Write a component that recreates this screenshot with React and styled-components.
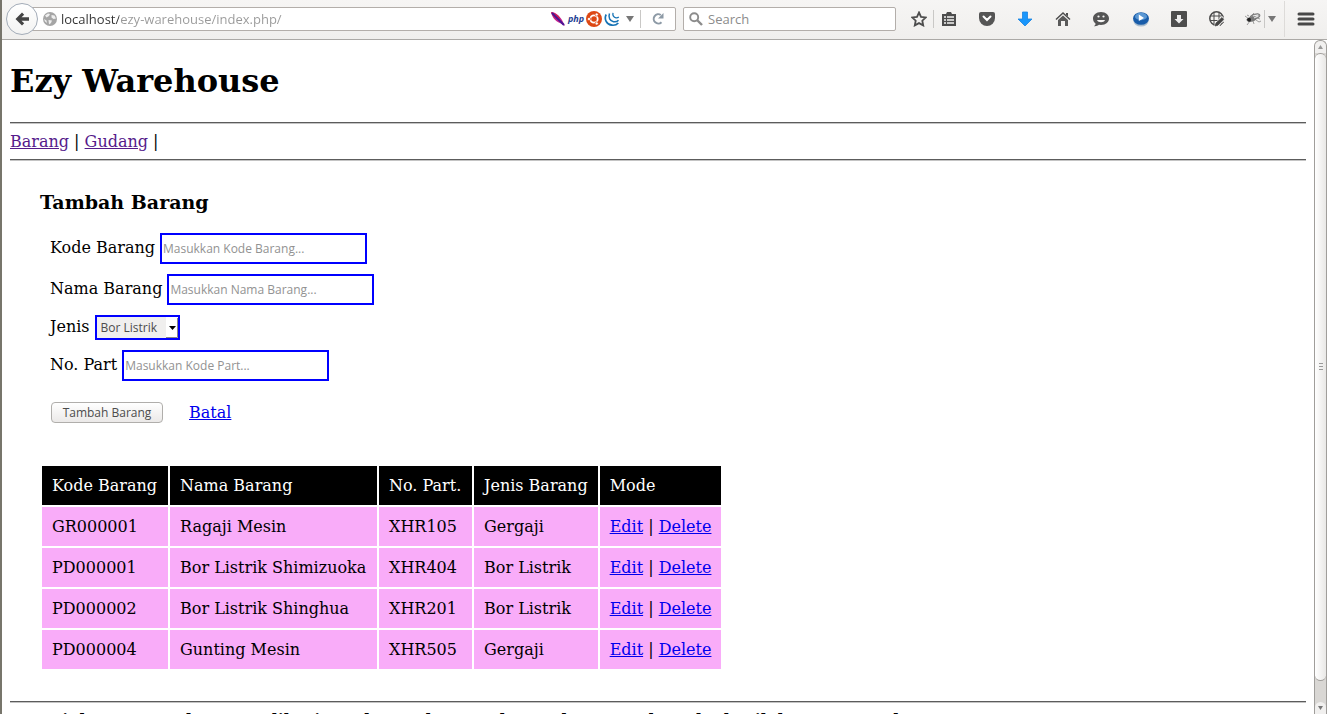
import React from "react";
import styled, { createGlobalStyle } from "styled-components";

const UI_FONT = '"Open Sans", "Noto Sans", sans-serif';
const PAGE_FONT = '"DejaVu Serif", serif';

const GlobalStyle = createGlobalStyle`
  * { box-sizing: border-box; }
  body { margin: 0; background: #fff; }
`;

const Window = styled.div`
  display: flex;
  flex-direction: column;
  height: 100vh;
  overflow: hidden;
  border-left: 2px solid #77756b;
  background: #fff;
`;

const Toolbar = styled.header`
  display: flex;
  align-items: center;
  flex: none;
  height: 40px;
  padding: 0 0 2px 4px;
  border-bottom: 1px solid #aba9a6;
  background: linear-gradient(#f6f5f4, #f0efed);
  font-family: ${UI_FONT};
`;

const BackButton = styled.button`
  position: relative;
  z-index: 1;
  display: grid;
  place-items: center;
  flex: none;
  width: 32px;
  height: 32px;
  margin-right: -12px;
  padding: 0;
  border: 1px solid #a3acb8;
  border-radius: 50%;
  background: linear-gradient(#fff, #f3f3f2);
`;

const Field = styled.div`
  display: flex;
  align-items: center;
  height: 24px;
  border: 1px solid #b3aeaa;
  border-radius: 2px;
  background: #fff;
`;

const UrlField = styled(Field)`
  flex: 1;
  padding-left: 15px;
`;

const SearchField = styled(Field)`
  flex: none;
  width: 213px;
  margin: 0 8px 0 7px;
  padding-left: 5px;
  gap: 5px;
`;

const BareInput = styled.input`
  flex: 1;
  min-width: 0;
  padding: 0;
  border: 0;
  outline: 0;
  background: transparent;
  color: #333;
  font: 13px/20px ${UI_FONT};
  &::placeholder { color: #8c8c8c; opacity: 1; }
`;

const UrlInput = styled(BareInput)`
  margin-left: 3px;
  background: linear-gradient(90deg, #333 58px, #999 58px);
  background-clip: text;
  color: transparent;
`;

const IconButton = styled.button`
  display: grid;
  place-items: center;
  flex: none;
  width: ${(p) => p.$width}px;
  height: 24px;
  padding: 0;
  border: 0;
  background: transparent;
`;

const Divider = styled.span`
  flex: none;
  width: 1px;
  height: ${(p) => p.$height || 18}px;
  margin-left: ${(p) => p.$space || 0}px;
  background: ${(p) => (p.$height ? "#dddbd9" : "#c9c8c6")};
`;

const Badges = styled.div`
  display: flex;
  align-items: center;
  gap: 2px;
`;

const PhpMark = styled.span`
  width: 16px;
  color: #1f3f94;
  font: italic bold 9px/12px ${UI_FONT};
`;

const Viewport = styled.div`
  display: flex;
  flex: 1;
  min-height: 0;
`;

const Page = styled.main`
  flex: 1;
  min-width: 0;
  overflow: hidden;
  padding: 0 8px;
  color: #000;
  font: 16px/19px ${PAGE_FONT};
`;

const Title = styled.h1`
  margin: 21px 0;
  font-size: 32px;
  line-height: 40px;
`;

const Rule = styled.hr`
  height: 2px;
  margin: 8px 0;
  border: 0;
  border-top: 1px solid #5c5c5c;
  background: #c4c4c4;
`;

const Link = styled.a`
  color: ${(p) => (p.$visited ? "#551a8b" : "#0000ee")};
  text-decoration: underline;
`;

const Content = styled.section`
  padding: 22px 30px;
`;

const Heading = styled.h3`
  margin: 0 0 20px;
  font-size: 19px;
  line-height: 22px;
`;

const Form = styled.form`
  display: flex;
  flex-direction: column;
  gap: 10px;
  padding: 0 10px;
`;

const FormRow = styled.div`
  display: flex;
  align-items: baseline;
  gap: 5px;
`;

const TextInput = styled.input`
  width: 207px;
  height: 31px;
  padding: 0 1px;
  border: 2px solid #0000ff;
  outline: 0;
  background: #fff;
  color: #4c4c4c;
  font: 12px/20px ${UI_FONT};
  &::placeholder { color: #929292; opacity: 1; }
`;

const SelectBox = styled.span`
  display: inline-grid;
  align-items: center;
  width: 85px;
  height: 25px;
  > * { grid-area: 1 / 1; }
  > svg { justify-self: end; margin-right: 2px; pointer-events: none; }
`;

const Select = styled.select`
  appearance: none;
  width: 100%;
  height: 25px;
  padding: 0 0 0 4px;
  border: 2px solid #0000ff;
  border-radius: 0;
  background: #f0efee;
  color: #4c4c4c;
  font: 12px/20px ${UI_FONT};
`;

const Actions = styled.div`
  display: flex;
  align-items: center;
  gap: 26px;
  padding: 11px 1px 0;
`;

const SubmitButton = styled.button`
  width: 112px;
  height: 21px;
  padding: 0;
  border: 1px solid #b0aeab;
  border-radius: 4px;
  background: linear-gradient(#fff, #ebe9e8);
  color: #4c4c4c;
  font: 12px/18px ${UI_FONT};
`;

const Table = styled.table`
  margin-top: 41px;
  border-collapse: separate;
  border-spacing: 2px;
  white-space: nowrap;
`;

const HeadCell = styled.th`
  width: ${(p) => p.$width}px;
  padding: 10px;
  background: #000;
  color: #fff;
  font-weight: normal;
  text-align: left;
`;

const Cell = styled.td`
  padding: 10px;
  background: #f9acf9;
`;

const Footer = styled.h4`
  margin: 7px 0 0;
  font-size: 16px;
  line-height: 19px;
  white-space: nowrap;
`;

const Scrollbar = styled.div`
  display: flex;
  flex-direction: column;
  flex: none;
  width: 13px;
  border: 1px solid #a09e9b;
  border-bottom: 0;
  border-radius: 6px 6px 0 0;
  background: #d9d7d4;
`;

const ScrollArrow = styled.button`
  display: grid;
  place-items: center;
  flex: none;
  height: 12px;
  padding: 0;
  border: 0;
  border-radius: 6px 6px 0 0;
  background: #f1f0ef;
`;

const Thumb = styled.div`
  display: grid;
  place-items: center;
  flex: 1;
  margin-bottom: 21px;
  border: solid #a09e9b;
  border-width: 1px 0;
  border-radius: 6px;
  background: linear-gradient(90deg, #fff, #e9e8e6);
`;

const Svg = ({ size = 16, width, height, children }) => (
  <svg width={width || size} height={height || size} viewBox={`0 0 ${width || size} ${height || size}`} fill="none" aria-hidden="true">
    {children}
  </svg>
);

const Caret = () => (
  <Svg width={8} height={6}><path d="M0 0h8L4 6z" fill="#777" /></Svg>
);

const icons = {
  back: <Svg><path d="M8 1.5 1.5 8 8 14.5l2.2-2.2L7.5 9.8H15V6.2H7.5l2.7-2.5z" fill="#444" /></Svg>,
  globe: (
    <Svg>
      <circle cx="8" cy="8" r="7" fill="#a5a5a5" />
      <path d="M3 4.500 6 2.500l2 .5-1 2-2.500 1.500zM9.500 4l3 .5 1.500 3-2.500.5-2-1.500zM6.500 9l3.500.500L9 12l-2 1.500zM2 8l2.500 1.500L5 12l-2-1.500z" fill="#eee" />
    </Svg>
  ),
  feather: (
    <Svg>
      <path d="M1 1c4 0 8 3 11 8l3 6-5-3C5 10 2 6 1 1z" fill="#c4248e" />
      <path d="M1 1c4 1 7 3 9 6L8 9C4 7 2 4 1 1z" fill="#d5244b" />
      <path d="m2 2 9 9 3 3" stroke="#4b1595" strokeWidth="2" />
    </Svg>
  ),
  ubuntu: (
    <Svg>
      <circle cx="8" cy="8" r="8" fill="#dd4814" />
      <circle cx="8" cy="8" r="3.7" stroke="#fff" strokeWidth="1.8" />
      <circle cx="3" cy="8" r="1.6" fill="#fff" stroke="#dd4814" strokeWidth=".7" />
      <circle cx="10.7" cy="3.5" r="1.6" fill="#fff" stroke="#dd4814" strokeWidth=".7" />
      <circle cx="10.7" cy="12.5" r="1.6" fill="#fff" stroke="#dd4814" strokeWidth=".7" />
    </Svg>
  ),
  jquery: (
    <Svg>
      <path d="M2.200 3.500C-.2 8 2.500 13.500 8 14.200c2.500.3 4.700-.4 6.300-2.200" stroke="#1673b5" strokeWidth="1.700" />
      <path d="M5.500 2.500C4 6.500 6 10 9.500 10.700c2 .3 3.700-.1 5-1.500" stroke="#1673b5" strokeWidth="1.500" />
      <path d="M9 1.800c-.6 2.600.7 4.700 3 5.100 1.100.1 2-.1 2.800-.8" stroke="#1673b5" strokeWidth="1.300" />
    </Svg>
  ),
  reload: (
    <Svg size={14}>
      <path d="M10.500 10.200A4.600 4.600 0 1 1 9.800 3" stroke="#8d9aa6" strokeWidth="2" />
      <path d="M12.500 1v5.500H7z" fill="#8d9aa6" />
    </Svg>
  ),
  search: (
    <Svg size={14}>
      <circle cx="5.200" cy="5.200" r="4" stroke="#8c8c8c" strokeWidth="1.900" />
      <path d="m8 8 5 5" stroke="#8c8c8c" strokeWidth="2.400" />
    </Svg>
  ),
  star: <Svg><path d="m8 1.500 2 4.300 4.800.6-3.500 3.300.9 4.700L8 12.100l-4.200 2.300.9-4.700L1.200 6.400 6 5.800z" stroke="#4d4d4d" strokeWidth="1.800" /></Svg>,
  list: (
    <Svg>
      <path d="M1 3h4l1-2h4l1 2h4v12H1z" fill="#4d4d4d" />
      <path d="M3 6h2M3 9h2M3 12h2M6 6h7M6 9h7M6 12h7" stroke="#f4f3f2" strokeWidth="1.500" />
    </Svg>
  ),
  pocket: (
    <Svg>
      <path d="M2 1h12q2 0 2 2v4a8 8 0 0 1-16 0V3q0-2 2-2z" fill="#555" />
      <path d="m4.500 5.500 3.500 3.500 3.500-3.500" stroke="#fff" strokeWidth="2" strokeLinecap="round" />
    </Svg>
  ),
  download: <Svg><path d="M5.500 1h5v7H15l-7 7-7-7h4.500z" fill="#1a96fb" stroke="#1683e2" strokeWidth=".8" /></Svg>,
  home: (
    <Svg>
      <path d="M1 8.500 8 2l7 6.500" stroke="#4d4d4d" strokeWidth="1.500" />
      <path d="M3 9 8 4.500 13 9v6h-3v-5H6v5H3z" fill="#5a5a5a" />
      <path d="M11 2h2v3.500l-2-1.800z" fill="#4d4d4d" />
    </Svg>
  ),
  chat: (
    <Svg>
      <path d="M8 1c5 0 8 3 8 6.500S13 14 8 14l-2-.2c-1 1-3 1.600-5 1.400 1-.7 1.700-1.700 1.500-2.700C1 11.500 0 9.500 0 7.500 0 4 3 1 8 1z" fill="#555" />
      <path d="M4 9h8c-1 3-7 3-8 0z" fill="#f6f5f4" />
      <circle cx="5.500" cy="5.500" r="1.100" fill="#f6f5f4" />
      <circle cx="10.500" cy="5.500" r="1.100" fill="#f6f5f4" />
    </Svg>
  ),
  play: (
    <Svg>
      <ellipse cx="8" cy="10" rx="7.500" ry="5.500" fill="#a9bccd" />
      <ellipse cx="8" cy="7.500" rx="8" ry="6.300" fill="#185ca9" />
      <ellipse cx="8" cy="5.500" rx="6" ry="3.700" fill="#5a97d3" />
      <path d="M5.800 3.500 11 7l-5.200 3z" fill="#fff" />
    </Svg>
  ),
  save: (
    <Svg>
      <rect x="0" y="0" width="16" height="16" rx="1" fill="#4d4d4d" />
      <path d="M6 4h4v4h2.500L8 12.500 3.500 8H6z" fill="#eee" />
    </Svg>
  ),
  net: (
    <Svg>
      <circle cx="7.500" cy="7.500" r="6.700" stroke="#4b4b4b" strokeWidth="1.500" />
      <path d="M1 5h13M1 9.500h13M5 1v13M10 1v13" stroke="#4b4b4b" />
      <path d="m5 16 1-4 7-7 3 3-7 8z" fill="#f4f3f2" />
      <path d="m6 15 1-3 6-5.500 1.700 1.700-5.700 6zM11 15l4-4" fill="#444" stroke="#444" strokeWidth=".7" />
    </Svg>
  ),
  fly: (
    <Svg>
      <ellipse cx="10" cy="5.500" rx="5" ry="2.300" fill="#aaa" stroke="#777" transform="rotate(-18 10 5.500)" />
      <path d="m0 5 4 3-3 1M5 10l-3 4M8 10l1 3M11 9l3 2 2-1M4 5 2 4M12 7l3 1M7 4l2-2" stroke="#888" strokeWidth=".8" />
      <ellipse cx="7" cy="8" rx="4.500" ry="2.600" fill="#777" transform="rotate(-15 7 8)" />
      <circle cx="4" cy="8.700" r="2" fill="#222" />
      <path d="m8 5 5-1M9 7l4-2" stroke="#eee" />
    </Svg>
  ),
  menu: <Svg width={18} height={14}><path d="M2 2h14M2 7h14M2 12h14" stroke="#484848" strokeWidth="3" strokeLinecap="round" /></Svg>,
};

const tools = [
  ["list", "Bookmarks list", 30],
  ["pocket", "Pocket", 46],
  ["download", "Downloads", 30],
  ["home", "Home", 46],
  ["chat", "Chat", 30],
  ["play", "Player", 50],
  ["save", "Save", 26],
  ["net", "Network", 50],
  ["fly", "Firebug", 22],
];

const columns = [
  ["Kode Barang", 126],
  ["Nama Barang", 207],
  ["No. Part.", 93],
  ["Jenis Barang", 123],
  ["Mode", 119],
];

const items = [
  ["GR000001", "Ragaji Mesin", "XHR105", "Gergaji"],
  ["PD000001", "Bor Listrik Shimizuoka", "XHR404", "Bor Listrik"],
  ["PD000002", "Bor Listrik Shinghua", "XHR201", "Bor Listrik"],
  ["PD000004", "Gunting Mesin", "XHR505", "Gergaji"],
];

const TextRow = ({ id, label, placeholder }) => (
  <FormRow>
    <label htmlFor={id}>{label}</label>
    <TextInput id={id} type="text" placeholder={placeholder} />
  </FormRow>
);

const BrowserToolbar = () => (
  <Toolbar>
    <BackButton type="button" aria-label="Back">{icons.back}</BackButton>
    <UrlField>
      {icons.globe}
      <UrlInput aria-label="Address" defaultValue="localhost/ezy-warehouse/index.php/" />
      <Badges>
        {icons.feather}
        <PhpMark>php</PhpMark>
        {icons.ubuntu}
        {icons.jquery}
      </Badges>
      <IconButton type="button" aria-label="History" $width={20}><Caret /></IconButton>
      <Divider />
      <IconButton type="button" aria-label="Reload" $width={34}>{icons.reload}</IconButton>
    </UrlField>
    <SearchField>
      {icons.search}
      <BareInput aria-label="Search" placeholder="Search" />
    </SearchField>
    <IconButton type="button" aria-label="Bookmark" $width={29}>{icons.star}</IconButton>
    <Divider />
    {tools.map(([name, label, width]) => (
      <IconButton key={name} type="button" aria-label={label} $width={width}>{icons[name]}</IconButton>
    ))}
    <Divider />
    <IconButton type="button" aria-label="More" $width={14}><Caret /></IconButton>
    <Divider $height={36} $space={5} />
    <IconButton type="button" aria-label="Menu" $width={42}>{icons.menu}</IconButton>
  </Toolbar>
);

export default function App() {
  return (
    <Window>
      <GlobalStyle />
      <BrowserToolbar />
      <Viewport>
        <Page>
          <Title>Ezy Warehouse</Title>
          <Rule />
          <nav>
            <Link href="#barang" $visited>Barang</Link> | <Link href="#gudang" $visited>Gudang</Link> |
          </nav>
          <Rule />
          <Content>
            <Heading>Tambah Barang</Heading>
            <Form>
              <TextRow id="kode" label="Kode Barang" placeholder="Masukkan Kode Barang..." />
              <TextRow id="nama" label="Nama Barang" placeholder="Masukkan Nama Barang..." />
              <FormRow>
                <label htmlFor="jenis">Jenis</label>
                <SelectBox>
                  <Select id="jenis" defaultValue="Bor Listrik">
                    <option>Bor Listrik</option>
                    <option>Gergaji</option>
                  </Select>
                  <Svg width={12} height={21}>
                    <path d="M0 0h12v21H0z" fill="#fff" />
                    <path d="M0 20.500h11.500V1" stroke="#8a8885" />
                    <path d="M3 9h7l-3.500 4z" fill="#000" />
                  </Svg>
                </SelectBox>
              </FormRow>
              <TextRow id="part" label="No. Part" placeholder="Masukkan Kode Part..." />
              <Actions>
                <SubmitButton type="button">Tambah Barang</SubmitButton>
                <Link href="#batal">Batal</Link>
              </Actions>
            </Form>
            <Table>
              <thead>
                <tr>{columns.map(([name, width]) => <HeadCell key={name} scope="col" $width={width}>{name}</HeadCell>)}</tr>
              </thead>
              <tbody>
                {items.map((item) => (
                  <tr key={item[0]}>
                    {item.map((value) => <Cell key={value}>{value}</Cell>)}
                    <Cell><Link href="#edit">Edit</Link> | <Link href="#delete">Delete</Link></Cell>
                  </tr>
                ))}
              </tbody>
            </Table>
          </Content>
          <Rule />
          <Footer>Copyright Ezy Warehouse, aplikasi pendataan barang dan gudang untuk usaha kecil dan menengah</Footer>
        </Page>
        <Scrollbar>
          <ScrollArrow type="button" aria-label="Scroll up"><Svg width={5} height={4}><path d="M0 4h5L2.500 0z" fill="#999" /></Svg></ScrollArrow>
          <Thumb><Svg width={4} height={8}><path d="M0 .5h4M0 3.500h4M0 6.500h4" stroke="#999" /></Svg></Thumb>
          <ScrollArrow type="button" aria-label="Scroll down"><Svg width={5} height={4}><path d="M0 0h5L2.500 4z" fill="#777" /></Svg></ScrollArrow>
        </Scrollbar>
      </Viewport>
    </Window>
  );
}
